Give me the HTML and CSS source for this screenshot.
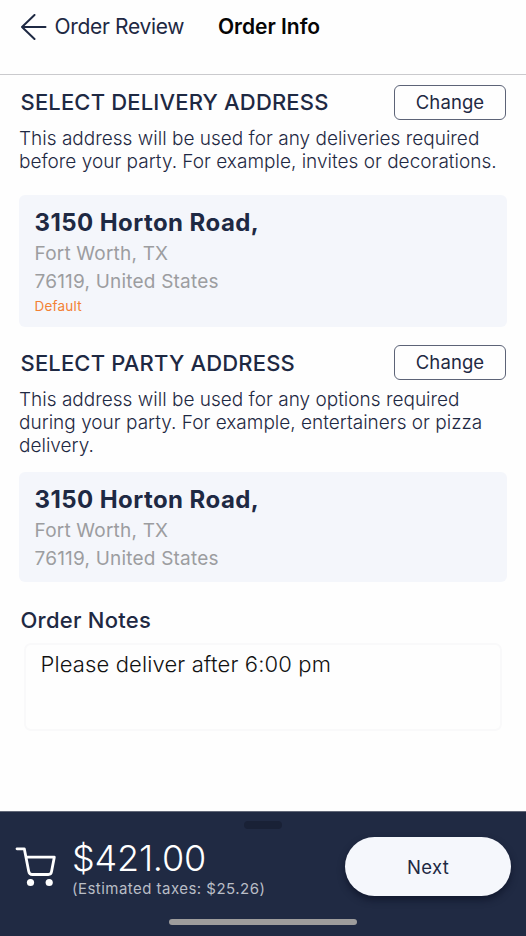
FILE: index.html
```html
<!DOCTYPE html>
<html lang="en">
<head>
<meta charset="utf-8">
<title>Order Info</title>
<link rel="stylesheet" href="styles.css">
</head>
<body>
<div class="screen">
  <header class="topbar">
    <a class="back">
      <svg class="back-icon" width="26" height="26" viewBox="0 0 26 26" fill="none" stroke="currentColor" stroke-width="2" stroke-linecap="round" stroke-linejoin="round"><path d="M24.500 13H1M13.500 1L1 13l12.500 12"/></svg>
      <span class="back-label">Order Review</span>
    </a>
    <h1 class="title">Order Info</h1>
  </header>
  <main class="content">
    <section class="group delivery">
      <div class="group-head"><h2>SELECT DELIVERY ADDRESS</h2><button class="change">Change</button></div>
      <p class="hint">This address will be used for any deliveries required<br>before your party. For example, invites or decorations.</p>
      <div class="card">
        <strong class="street">3150 Horton Road,</strong>
        <span class="line city">Fort Worth, TX</span>
        <span class="line">76119, United States</span>
        <span class="default">Default</span>
      </div>
    </section>
    <section class="group party">
      <div class="group-head"><h2>SELECT PARTY ADDRESS</h2><button class="change">Change</button></div>
      <p class="hint">This address will be used for any options required<br>during your party. For example, entertainers or pizza<br>delivery.</p>
      <div class="card">
        <strong class="street">3150 Horton Road,</strong>
        <span class="line city">Fort Worth, TX</span>
        <span class="line">76119, United States</span>
      </div>
    </section>
    <section class="notes">
      <h2 class="notes-title">Order Notes</h2>
      <div class="notes-box">Please deliver after 6:00 pm</div>
    </section>
  </main>
  <footer class="footer">
    <div class="grabber"></div>
    <div class="checkout">
      <svg class="cart" width="42" height="42" viewBox="0 0 42 42"><path d="M2 2.800h7.300l4.400 22.400q.6 3.300 3.600 3.300h16q2.700 0 3.200-2.700L39.300 11.200H11" fill="none" stroke="currentColor" stroke-width="2.800" stroke-linecap="round" stroke-linejoin="round"/><circle cx="15.500" cy="36.500" r="3.600" fill="currentColor"/><circle cx="34.200" cy="36.500" r="3.600" fill="currentColor"/></svg>
      <div class="totals">
        <span class="amount">$421.00</span>
        <span class="taxes">(Estimated taxes: $25.26)</span>
      </div>
      <button class="next">Next</button>
    </div>
    <div class="home-bar"></div>
  </footer>
</div>
</body>
</html>
```
FILE: styles.css
```css
* { box-sizing: border-box; }
body { margin: 0; background: #fefefe; font-family: Inter, sans-serif; color: #1e2943; }
h1, h2, p { margin: 0; }
button { font-family: inherit; color: inherit; padding: 0; }
.screen { width: 526px; height: 936px; display: flex; flex-direction: column; overflow: hidden; }
.topbar { height: 75px; flex: none; display: flex; align-items: flex-start; padding: 14px 20px 0 21px; border-bottom: 1px solid #cacacd; }
.back { display: flex; align-items: center; width: 197px; height: 26px; white-space: nowrap; }
.back-icon { flex: none; margin-right: 7.500px; }
.back-label { font-size: 21px; line-height: 26px; letter-spacing: -0.33px; }
.title { font-size: 21px; line-height: 26px; font-weight: 600; letter-spacing: -0.02px; color: #050505; white-space: nowrap; }
.content { flex: 1; padding: 9px 19px 0; }
.group-head { display: flex; align-items: center; justify-content: space-between; height: 36px; padding: 0 1px 0 1.500px; }
h2 { font-size: 22px; font-weight: 500; letter-spacing: 0.17px; white-space: nowrap; }
.change { width: 112px; height: 35px; border: 1px solid #5c6377; border-radius: 6px; background: #fefefe; font-size: 18.500px; letter-spacing: 0.1px; }
.hint { margin-top: 7px; font-size: 19px; line-height: 23px; font-weight: 300; letter-spacing: 0.01px; white-space: nowrap; }
.card { display: flex; flex-direction: column; margin-top: 22px; padding: 13px 16px 0 15.500px; width: 488px; height: 132px; border-radius: 6px; background: #f4f6fb; white-space: nowrap; }
.party { margin-top: 17px; }
.party h2 { padding-top: 1px; }
.party .hint { margin-top: 8px; }
.party .card { height: 110px; margin-top: 15px; }
.street { font-size: 24px; line-height: 30px; font-weight: 700; letter-spacing: 0.44px; }
.line { font-size: 19px; line-height: 28px; color: #9c9da0; letter-spacing: 0.2px; }
.city { margin-top: 2px; }
.default { font-size: 13.500px; line-height: 20px; color: #f38134; letter-spacing: 0.2px; }
.notes { margin-top: 24px; padding: 0 5px; }
.notes-title { margin-left: -3.500px; line-height: 28px; font-size: 22px; letter-spacing: 0.25px; }
.notes-box { margin-top: 9px; width: 478px; height: 88px; padding: 6px 14.500px; border: 2px solid #f9f9fa; border-radius: 7px; font-size: 22px; line-height: 26px; font-weight: 300; letter-spacing: 0.13px; color: #111; }
.footer { height: 125px; flex: none; display: flex; flex-direction: column; align-items: center; background: #202a43; border-top: 1px solid #626878; }
.grabber { width: 38px; height: 8px; margin-top: 9px; border-radius: 4px; background: #192136; }
.checkout { width: 100%; height: 60px; margin-top: 8px; padding: 0 15px; display: flex; align-items: flex-start; color: #fff; }
.cart { flex: none; margin-top: 9px; }
.totals { flex: 1; display: flex; flex-direction: column; margin-left: 15px; white-space: nowrap; }
.amount { font-size: 36px; line-height: 43px; font-weight: 300; letter-spacing: -0.2px; }
.taxes { font-size: 15px; line-height: 18px; color: #b9bdc6; letter-spacing: 0.47px; }
.next { flex: none; width: 166px; height: 59px; border: 0; border-radius: 30px; background: #f5f7fc; color: #1e2943; font-size: 18.500px; letter-spacing: 0.35px; box-shadow: 0 4px 7px #0b1226b0; }
.home-bar { width: 188px; height: 6px; margin-top: 22px; border-radius: 3px; background: #9d9c9c; }
```
